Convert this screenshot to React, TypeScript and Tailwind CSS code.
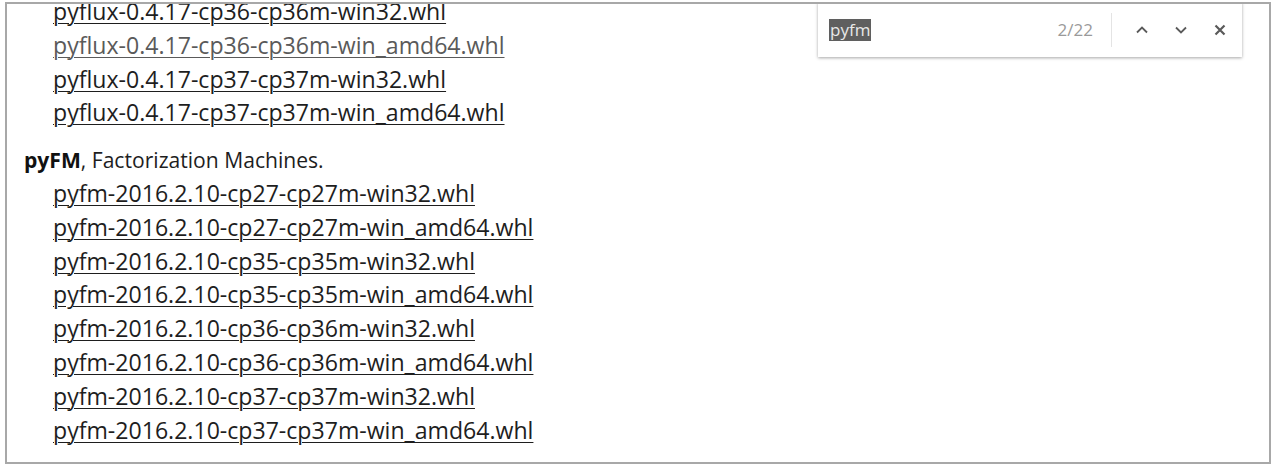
const FLUX = [
  { t: "pyflux-0.4.17-cp36-cp36m-win32.whl", v: false },
  { t: "pyflux-0.4.17-cp36-cp36m-win_amd64.whl", v: true },
  { t: "pyflux-0.4.17-cp37-cp37m-win32.whl", v: false },
  { t: "pyflux-0.4.17-cp37-cp37m-win_amd64.whl", v: false },
];

const FM = [
  "pyfm-2016.2.10-cp27-cp27m-win32.whl",
  "pyfm-2016.2.10-cp27-cp27m-win_amd64.whl",
  "pyfm-2016.2.10-cp35-cp35m-win32.whl",
  "pyfm-2016.2.10-cp35-cp35m-win_amd64.whl",
  "pyfm-2016.2.10-cp36-cp36m-win32.whl",
  "pyfm-2016.2.10-cp36-cp36m-win_amd64.whl",
  "pyfm-2016.2.10-cp37-cp37m-win32.whl",
  "pyfm-2016.2.10-cp37-cp37m-win_amd64.whl",
];

function FindBar() {
  return (
    <div className="absolute top-[-2px] left-[811px] flex h-[55px] w-[424px] items-center bg-white pl-[11px] pr-[14px] shadow-[0_1px_3px_rgba(0,0,0,0.35)]">
      <span className="bg-[#5f5f5f] px-[1px] text-[17px] leading-[22px] text-[#e8e8e8]">pyfm</span>
      <span className="ml-auto text-[17px] text-[#9a9a9a]">2/22</span>
      <div className="ml-[18px] h-[34px] w-px bg-[#e4e4e4]" />
      <div className="ml-[22px] flex items-center gap-[23px] text-[#5a5a5a]">
        <svg width="16" height="16" viewBox="0 0 16 16" fill="none" stroke="currentColor" strokeWidth="1.8">
          <path d="M3 10.5 8 5.5l5 5" />
        </svg>
        <svg width="16" height="16" viewBox="0 0 16 16" fill="none" stroke="currentColor" strokeWidth="1.8">
          <path d="M3 5.5 8 10.5l5-5" />
        </svg>
        <svg width="16" height="16" viewBox="0 0 16 16" fill="none" stroke="currentColor" strokeWidth="2.2">
          <path d="M3.5 3.5l9 9M12.5 3.5l-9 9" />
        </svg>
      </div>
    </div>
  );
}

export default function App() {
  return (
    <div className="h-[466px] w-[1280px] bg-white pl-[5px] pt-[2px] font-['Open_Sans','Noto_Sans',sans-serif]">
      <div className="relative h-[462px] w-[1266px] overflow-hidden border-2 border-[#a8a8a8]">
        <div className="mt-[-9px] pl-[17px] text-[23.1px] leading-[33.8px] text-[#1e1e1e]">
          <div className="pl-[29px]">
            {FLUX.map((f) => (
              <div key={f.t}>
                <a className={`underline decoration-1 underline-offset-[3px] ${f.v ? "text-[#5a5a5a]" : ""}`}>{f.t}</a>
              </div>
            ))}
          </div>
          <div className="mt-[13px] text-[21.1px]">
            <b className="font-bold text-[#111]">pyFM</b>, Factorization Machines.
          </div>
          <div className="pl-[29px]">
            {FM.map((f) => (
              <div key={f}>
                <a className="underline decoration-1 underline-offset-[3px]">{f}</a>
              </div>
            ))}
          </div>
        </div>
        <FindBar />
      </div>
    </div>
  );
}
